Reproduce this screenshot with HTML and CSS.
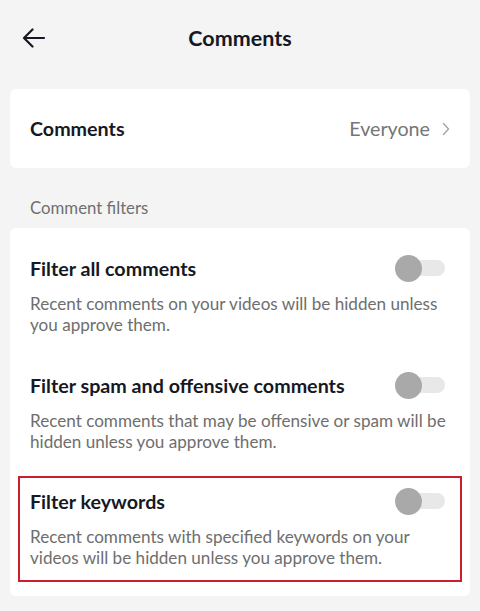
FILE: index.html
```html
<!DOCTYPE html>
<html>
<head>
<meta charset="utf-8">
<link rel="stylesheet" href="styles.css">
</head>
<body>
<div class="page">
  <header class="topbar">
    <svg class="back" width="24" height="20" viewBox="0 0 24 20"><path d="M22 10H2M10.5 1.5L2 10l8.5 8.5" fill="none" stroke="#161823" stroke-width="2.2" stroke-linecap="round" stroke-linejoin="round"/></svg>
    <h1 class="title">Comments</h1>
  </header>

  <section class="card card-single">
    <div class="nav-row">
      <span class="nav-label">Comments</span>
      <span class="nav-value">Everyone
        <svg class="chev" width="8" height="14" viewBox="0 0 8 14"><path d="M1.5 1.5L6.5 7l-5 5.5" fill="none" stroke="#a6a6a6" stroke-width="1.4" stroke-linecap="round" stroke-linejoin="round"/></svg>
      </span>
    </div>
  </section>

  <div class="section-label">Comment filters</div>

  <section class="card card-list">
    <div class="row">
      <div class="row-head">
        <span class="row-title">Filter all comments</span>
        <span class="toggle"><span class="knob"></span></span>
      </div>
      <p class="row-desc">Recent comments on your videos will be hidden unless you approve them.</p>
    </div>
    <div class="row">
      <div class="row-head">
        <span class="row-title">Filter spam and offensive comments</span>
        <span class="toggle"><span class="knob"></span></span>
      </div>
      <p class="row-desc">Recent comments that may be offensive or spam will be hidden unless you approve them.</p>
    </div>
    <div class="row row-highlight">
      <div class="row-head">
        <span class="row-title">Filter keywords</span>
        <span class="toggle"><span class="knob"></span></span>
      </div>
      <p class="row-desc">Recent comments with specified keywords on your videos will be hidden unless you approve them.</p>
    </div>
  </section>
</div>
</body>
</html>
```

FILE: styles.css
```css
* { box-sizing: border-box; }
html, body { margin: 0; padding: 0; }
body {
  background: #f4f4f4;
  font-family: "Lato", "Noto Sans", sans-serif;
  color: #161823;
  width: 480px;
  height: 611px;
  overflow: hidden;
}
.page { padding: 0 10px; }
.topbar {
  height: 76px;
  display: flex;
  align-items: center;
  justify-content: center;
  position: relative;
}
.back { position: absolute; left: 12px; top: 28px; }
.title {
  margin: 0;
  font-size: 21.5px;
  font-weight: 700;
  line-height: 26px;
}
.card {
  background: #fff;
  border-radius: 6px;
}
.card-single { margin-top: 13px; }
.nav-row {
  height: 79px;
  display: flex;
  align-items: center;
  justify-content: space-between;
  padding: 0 20px;
}
.nav-label { font-size: 19.7px; font-weight: 700; }
.nav-value {
  display: flex;
  align-items: center;
  gap: 12px;
  font-size: 19.7px;
  color: #767676;
}
.section-label {
  padding: 28px 20px 0;
  height: 60px;
  font-size: 16.8px;
  line-height: 24px;
  color: #707070;
}
.card-list {
  padding: 15px 8px 14px;
  display: flex;
  flex-direction: column;
  gap: 13px;
}
.card-list .row:nth-child(3) { margin-top: -1px; }
.row {
  border: 2px solid transparent;
  padding: 10px 15px 10px 10px;
}
.row-highlight { border-color: #c9202c; padding-bottom: 12px; }
.row-head {
  display: flex;
  align-items: center;
  justify-content: space-between;
  height: 26px;
}
.row-title { font-size: 19.7px; font-weight: 700; }
.row-desc {
  margin: 12px -12px 0 0;
  font-size: 17.1px;
  line-height: 21px;
  color: #6e6e6e;
}
.toggle {
  position: relative;
  width: 50px;
  height: 16px;
  border-radius: 8px;
  background: #e8e8e8;
}
.knob {
  position: absolute;
  left: 0;
  top: -5px;
  width: 27px;
  height: 27px;
  border-radius: 50%;
  background: #a9a9a9;
}
```
